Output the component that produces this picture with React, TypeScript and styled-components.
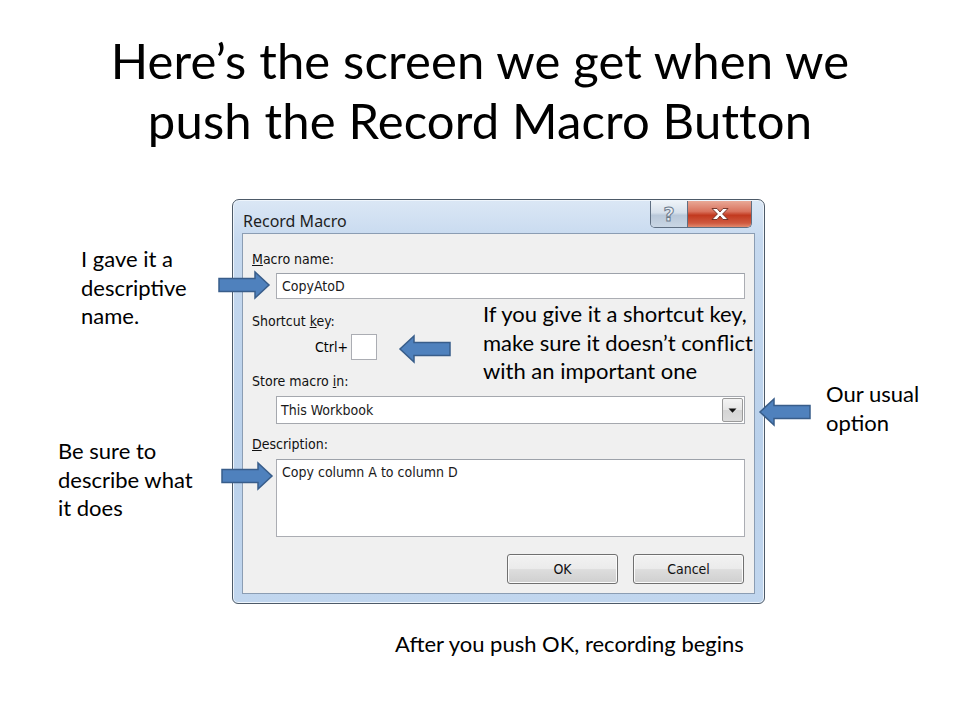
import React from "react";
import styled, { createGlobalStyle } from "styled-components";

const GlobalStyle = createGlobalStyle`
  html, body { margin: 0; padding: 0; background: #ffffff; }
  body { font-family: "Lato", "Open Sans", sans-serif; color: #000; }
  * { box-sizing: border-box; }
`;

const Slide = styled.div`
  position: relative;
  width: 960px;
  height: 720px;
  background: #ffffff;
  overflow: hidden;
  display: flex;
  flex-direction: column;
  align-items: center;
`;

const Title = styled.h1`
  margin: 30px 0 0 0;
  font-family: "Lato", sans-serif;
  font-weight: 400;
  font-size: 49px;
  line-height: 60px;
  text-align: center;
  color: #000;
  letter-spacing: 0.15px;
`;

const Stage = styled.div`
  align-self: stretch;
  margin-top: 49px;
  padding-left: 232px;
`;

const Footer = styled.div`
  align-self: stretch;
  margin-top: 27px;
  padding-left: 395px;
  font-family: "Lato", sans-serif;
  font-size: 22px;
  line-height: 26px;
`;

const Callout = styled.div<{ $x: number; $y: number }>`
  position: absolute;
  left: ${(p) => p.$x}px;
  top: ${(p) => p.$y}px;
  font-family: "Lato", sans-serif;
  font-size: 22px;
  line-height: 28.5px;
  color: #000;
  white-space: nowrap;
`;

const ArrowBox = styled.svg<{ $x: number; $y: number }>`
  position: absolute;
  left: ${(p) => p.$x}px;
  top: ${(p) => p.$y}px;
  overflow: visible;
`;

const BlockArrow = ({ x, y, dir }: { x: number; y: number; dir: "left" | "right" }) => (
  <ArrowBox $x={x} $y={y} width={52} height={28} viewBox="0 0 52 28">
    <g transform={dir === "left" ? "translate(52 0) scale(-1 1)" : undefined}>
      <path
        d="M1 7.5 H37 V1 L51 14 L37 27 V20.5 H1 Z"
        fill="#4f81bd"
        stroke="#385d8a"
        strokeWidth={1.5}
        strokeLinejoin="miter"
      />
    </g>
  </ArrowBox>
);

/* ---------- Dialog ---------- */

const Dialog = styled.div`
  width: 533px;
  height: 405px;
  border: 1px solid #4d5a68;
  border-radius: 7px 7px 6px 6px;
  background: linear-gradient(180deg, #dbe7f5 0%, #c6d9ef 10%, #bad1eb 60%, #c1d6ee 100%);
  box-shadow: inset 0 0 0 1px #eef5fc;
  display: flex;
  flex-direction: column;
  padding: 0 9px 9px 9px;
`;

const TitleBar = styled.div`
  height: 33px;
  display: flex;
  align-items: flex-start;
  justify-content: space-between;
`;

const DialogTitle = styled.span`
  margin-top: 11px;
  margin-left: 1px;
  font-family: "Noto Sans", "Open Sans", sans-serif;
  font-size: 16px;
  line-height: 20px;
  color: #1e1e1e;
`;

const Caption = styled.div`
  display: flex;
  margin-top: 1px;
  margin-right: 3px;
  border: 1px solid #5f6f82;
  border-top: none;
  border-radius: 0 0 5px 5px;
  overflow: hidden;
`;

const HelpButton = styled.div`
  width: 37px;
  height: 26px;
  display: flex;
  align-items: center;
  justify-content: center;
  background: linear-gradient(180deg, #eef3f8 0%, #d6e0eb 45%, #b9c8d9 55%, #c9d6e4 100%);
  border-right: 1px solid #5f6f82;
  font-family: "DejaVu Sans", sans-serif;
  font-weight: 700;
  font-size: 19px;
  color: #e9eef4;
  -webkit-text-stroke: 1px #6c7b8c;
`;

const CloseButton = styled.div`
  width: 63px;
  height: 26px;
  display: flex;
  align-items: center;
  justify-content: center;
  background: linear-gradient(180deg, #e9a896 0%, #d9735e 40%, #c2391f 55%, #cf5a40 85%, #e28a6e 100%);
`;

const Panel = styled.div`
  flex: 1;
  background: #f0f0f0;
  border: 1px solid #8b9db3;
  padding: 18px 9px 0 9px;
  display: flex;
  flex-direction: column;
  font-family: "DejaVu Sans Condensed", "DejaVu Sans", sans-serif;
  font-size: 14px;
  color: #000;
`;

const Label = styled.div<{ $gap: number }>`
  line-height: 15px;
  margin-top: ${(p) => p.$gap}px;
  color: #111;
`;

const Indented = styled.div<{ $gap: number }>`
  margin-top: ${(p) => p.$gap}px;
  margin-left: 24px;
`;

const TextBox = styled.div<{ $h: number }>`
  height: ${(p) => p.$h}px;
  background: #ffffff;
  border: 1px solid #abadb3;
  border-top-color: #9da2aa;
  padding: 4px 5px;
  line-height: 17px;
  color: #1a1a1a;
`;

const SelectBox = styled.div`
  height: 28px;
  background: #ffffff;
  border: 1px solid #a5a8ae;
  display: flex;
  align-items: stretch;
  justify-content: space-between;
`;

const SelectValue = styled.span`
  padding-left: 4px;
  align-self: center;
  color: #1a1a1a;
`;

const DropButton = styled.div`
  width: 21px;
  margin: 1px;
  border: 1px solid #9a9a9a;
  border-radius: 2px;
  background: linear-gradient(180deg, #f4f4f4 0%, #e6e6e6 50%, #d4d4d4 51%, #dcdcdc 100%);
  display: flex;
  align-items: center;
  justify-content: center;
`;

const CtrlRow = styled.div`
  margin-top: 5px;
  margin-left: 63px;
  display: flex;
  align-items: center;
  gap: 3px;
`;

const KeyBox = styled.div`
  width: 26px;
  height: 26px;
  background: #fff;
  border: 1px solid #abadb3;
`;

const ButtonRow = styled.div`
  margin-top: 17px;
  display: flex;
  justify-content: flex-end;
  gap: 15px;
  padding-right: 1px;
`;

const PushButton = styled.div`
  width: 111px;
  height: 30px;
  border: 1px solid #707070;
  border-radius: 3px;
  background: linear-gradient(180deg, #f2f2f2 0%, #ebebeb 48%, #dddddd 52%, #cfcfcf 100%);
  box-shadow: inset 0 0 0 1px #fbfbfb;
  display: flex;
  align-items: center;
  justify-content: center;
  font-size: 14px;
  color: #111;
`;

const CloseGlyph = () => (
  <svg width="20" height="14" viewBox="0 0 20 14">
    <path
      d="M2 1.5 H7 L10 5 L13 1.5 H18 L12.6 7 L18 12.5 H13 L10 9 L7 12.5 H2 L7.4 7 Z"
      fill="#ffffff"
      stroke="#6b2a1e"
      strokeWidth={0.9}
      strokeLinejoin="round"
    />
  </svg>
);

const DropGlyph = () => (
  <svg width="9" height="5" viewBox="0 0 9 5">
    <path d="M0.5 0.5 H8.5 L4.5 4.8 Z" fill="#111" />
  </svg>
);

const RecordMacroDialog = () => (
  <Dialog>
    <TitleBar>
      <DialogTitle>Record Macro</DialogTitle>
      <Caption>
        <HelpButton>?</HelpButton>
        <CloseButton>
          <CloseGlyph />
        </CloseButton>
      </Caption>
    </TitleBar>
    <Panel>
      <Label $gap={0}>
        <u>M</u>acro name:
      </Label>
      <Indented $gap={6}>
        <TextBox $h={26}>CopyAtoD</TextBox>
      </Indented>
      <Label $gap={15}>
        Shortcut <u>k</u>ey:
      </Label>
      <CtrlRow>
        <span>Ctrl+</span>
        <KeyBox />
      </CtrlRow>
      <Label $gap={14}>
        Store macro <u>i</u>n:
      </Label>
      <Indented $gap={7}>
        <SelectBox>
          <SelectValue>This Workbook</SelectValue>
          <DropButton>
            <DropGlyph />
          </DropButton>
        </SelectBox>
      </Indented>
      <Label $gap={13}>
        <u>D</u>escription:
      </Label>
      <Indented $gap={7}>
        <TextBox $h={78}>Copy column A to column D</TextBox>
      </Indented>
      <ButtonRow>
        <PushButton>OK</PushButton>
        <PushButton>Cancel</PushButton>
      </ButtonRow>
    </Panel>
  </Dialog>
);

export default function App() {
  return (
    <>
      <GlobalStyle />
      <Slide>
        <Title>
          Here’s the screen we get when we
          <br />
          push the Record Macro Button
        </Title>
        <Stage>
          <RecordMacroDialog />
        </Stage>
        <Footer>After you push OK, recording begins</Footer>

        <Callout $x={81} $y={245}>
          I gave it a
          <br />
          descriptive
          <br />
          name.
        </Callout>
        <Callout $x={483} $y={300}>
          If you give it a shortcut key,
          <br />
          make sure it doesn’t conflict
          <br />
          with an important one
        </Callout>
        <Callout $x={826} $y={380}>
          Our usual
          <br />
          option
        </Callout>
        <Callout $x={58} $y={437}>
          Be sure to
          <br />
          describe what
          <br />
          it does
        </Callout>

        <BlockArrow x={218} y={271} dir="right" />
        <BlockArrow x={399} y={335} dir="left" />
        <BlockArrow x={759} y={398} dir="left" />
        <BlockArrow x={221} y={462} dir="right" />
      </Slide>
    </>
  );
}
